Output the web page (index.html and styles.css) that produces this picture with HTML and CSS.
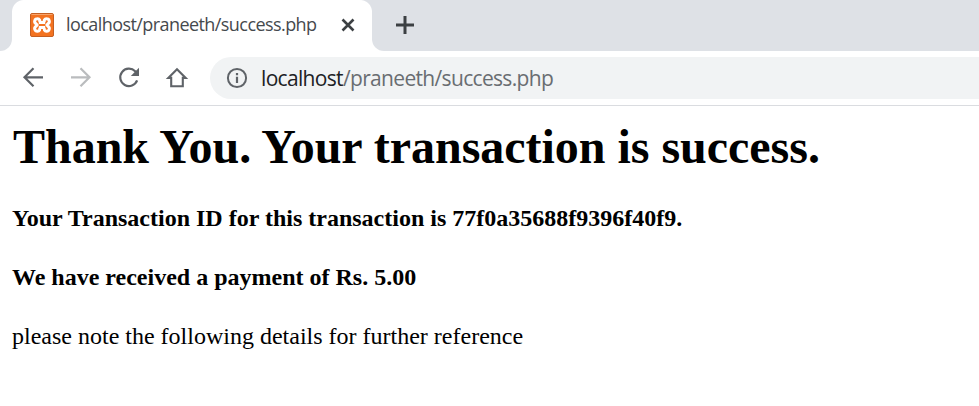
FILE: index.html
```html
<!DOCTYPE html>
<html lang="en">
<head>
<meta charset="utf-8">
<title>localhost/praneeth/success.php</title>
<link rel="stylesheet" href="styles.css">
</head>
<body>
<header class="browser">
  <div class="tabstrip">
    <div class="edge-left"></div>
    <div class="tab">
      <svg width="24" height="24" viewBox="0 0 24 24"><rect x=".5" y=".5" width="23" height="23" rx="1.5" fill="#f37321" stroke="#c55f22"/><path d="M1.5 1.5H22.5" stroke="#f7a46c"/><path d="M12 9.6H15.2M12 14.4H15.2M12 9.6H8.8M12 14.4H8.8M9.3 9.7C10.8 7.8 9.4 5.7 7.3 5.8C4.7 5.8 3.7 9 5.8 10.5L7.2 12L5.8 13.5C3.7 15 4.7 18.2 7.3 18.2C9.4 18.3 10.8 16.2 9.3 14.3M14.7 9.7C13.2 7.8 14.6 5.7 16.7 5.8C19.3 5.8 20.3 9 18.2 10.5L16.8 12L18.2 13.5C20.3 15 19.3 18.2 16.7 18.2C14.6 18.3 13.2 16.2 14.7 14.3" fill="none" stroke="#fff" stroke-width="3" stroke-linejoin="round"/></svg>
      <span class="tab-title">localhost/praneeth/success.php</span>
      <svg width="14" height="14" viewBox="0 0 14 14"><path d="M1.5 1.5L12.5 12.5M12.5 1.5L1.5 12.5" stroke="#3c4043" stroke-width="2.6"/></svg>
    </div>
    <div class="strip-rest">
      <svg width="18" height="18" viewBox="0 0 18 18"><path d="M9 0V18M0 9H18" stroke="#3c4043" stroke-width="3"/></svg>
    </div>
  </div>
  <nav class="toolbar">
    <svg width="24" height="24" viewBox="0 0 24 24"><path d="M22 11.3H3.5M12.5 2.3L3.5 11.3L12.5 20.3" fill="none" stroke="#5f6368" stroke-width="2.2"/></svg>
    <svg width="24" height="24" viewBox="0 0 24 24"><path d="M2 11.3H20.5M11.5 2.3L20.5 11.3L11.5 20.3" fill="none" stroke="#babcbe" stroke-width="2.2"/></svg>
    <svg width="24" height="24" viewBox="0 0 24 24"><path d="M20.1 14.4A8.7 8.7 0 1 1 18.2 5.3L20 7.1" fill="none" stroke="#5f6368" stroke-width="2.2"/><path d="M22 1.8V9.9H13.8Z" fill="#5f6368"/></svg>
    <svg width="24" height="24" viewBox="0 0 24 24"><path d="M4 11.9H6.2V20.3H17.8V11.9H20.7L12 3.2L3.3 11.9Z" fill="none" stroke="#5f6368" stroke-width="2.1"/></svg>
    <div class="address">
      <svg width="22" height="22" viewBox="0 0 22 22"><circle cx="11" cy="11" r="9.1" fill="none" stroke="#5f6368" stroke-width="2"/><path d="M11 9.8V16M11 6V8.2" stroke="#5f6368" stroke-width="2.2"/></svg>
      <span class="url"><span class="host">localhost</span>/praneeth/success.php</span>
    </div>
  </nav>
</header>
<main>
  <h1>Thank You. Your transaction is success.</h1>
  <h4>Your Transaction ID for this transaction is 77f0a35688f9396f40f9.</h4>
  <h4>We have received a payment of Rs. 5.00</h4>
  <p>please note the following details for further reference</p>
</main>
</body>
</html>
```
FILE: styles.css
```css
body { margin: 0; background: #fff; color: #000; font-family: "Liberation Serif", serif; overflow: hidden; }
svg { display: block; flex: none; }
.browser { border-bottom: 1px solid #dadce0; height: 105px; font-family: "Open Sans", sans-serif; }
.tabstrip { display: flex; height: 51px; background: #fff; }
.edge-left { flex: none; width: 12px; background: #dee1e6; border-bottom-right-radius: 12px; }
.tab { display: flex; align-items: center; flex: none; width: 360px; box-sizing: border-box; padding: 0 0 1px 18px; position: relative; }
.tab::before, .tab::after { content: ""; position: absolute; top: 0; width: 12px; height: 12px; }
.tab::before { left: 0; background: radial-gradient(circle at 100% 100%, transparent 11.5px, #dee1e6 12.5px); }
.tab::after { right: 0; background: radial-gradient(circle at 0 100%, transparent 11.5px, #dee1e6 12.5px); }
.tab-title { width: 275px; margin: 0 0 2px 12px; font-size: 18px; line-height: 24px; color: #45494d; white-space: nowrap; letter-spacing: -.57px; }
.strip-rest { display: flex; align-items: center; flex: 1; padding: 0 0 1px 24px; background: #dee1e6; border-bottom-left-radius: 12px; }
.toolbar { display: flex; align-items: center; height: 54px; gap: 24px; padding-left: 21px; }
.address { display: flex; align-items: center; flex: 1; height: 42px; margin-left: -3px; padding-left: 16px; background: #f1f3f4; border-radius: 21px 0 0 21px; }
.url { margin-left: 13px; font-size: 21px; line-height: 28px; color: #696d71; letter-spacing: -.67px; white-space: nowrap; }
.host { color: #202124; }
main { padding: 12px; }
h1 { margin: 0 0 29px; padding: 1px 0 0 1px; font-size: 48px; line-height: 56px; letter-spacing: -.02px; white-space: nowrap; }
h4, p { margin: 0 0 31px; font-size: 24px; line-height: 28px; white-space: nowrap; }
```
